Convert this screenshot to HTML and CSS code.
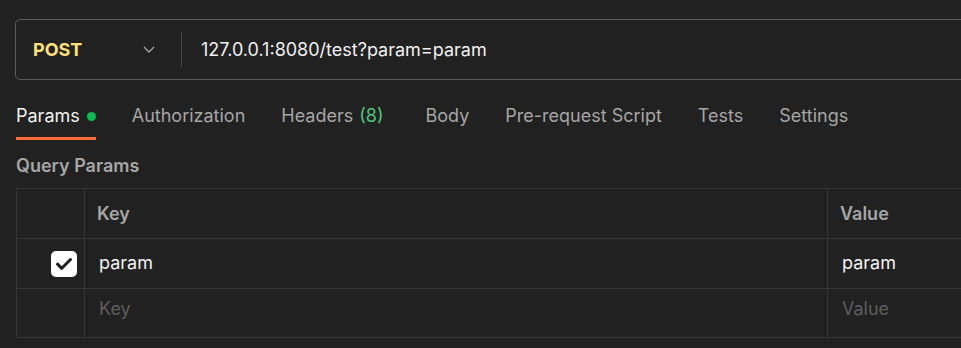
FILE: index.html
```html
<!DOCTYPE html>
<html lang="en">
<head>
    <meta charset="UTF-8">
    <meta name="viewport" content="width=device-width, initial-scale=1.0">
    <title>Request - Params</title>
    <link rel="stylesheet" href="styles.css">
</head>
<body>
    <div class="url-bar">
        <div class="method">
            <span class="method-name">POST</span>
            <svg class="chevron" width="12" height="7" viewBox="0 0 12 7">
                <path d="M1 1l5 5 5-5" fill="none" stroke="#a6a6a6" stroke-width="1.3"/>
            </svg>
        </div>
        <div class="url-divider"></div>
        <div class="url-text">127.0.0.1:8080/test?param=param</div>
    </div>

    <div class="tabs">
        <a href="#" class="tab active">Params <span class="dot"></span></a>
        <a href="#" class="tab">Authorization</a>
        <a href="#" class="tab">Headers <span class="count">(8)</span></a>
        <a href="#" class="tab">Body</a>
        <a href="#" class="tab">Pre-request Script</a>
        <a href="#" class="tab">Tests</a>
        <a href="#" class="tab">Settings</a>
    </div>

    <div class="section-title">Query Params</div>

    <div class="params-table">
        <div class="row header">
            <div class="cell check"></div>
            <div class="cell key">Key</div>
            <div class="cell value">Value</div>
        </div>
        <div class="row">
            <div class="cell check">
                <span class="checkbox">
                    <svg width="18" height="14" viewBox="0 0 18 14">
                        <path d="M2.5 7.2l4.3 4.1 8.7-8.8" fill="none" stroke="#1f1f1f" stroke-width="3" stroke-linecap="round" stroke-linejoin="round"/>
                    </svg>
                </span>
            </div>
            <div class="cell key filled">param</div>
            <div class="cell value filled">param</div>
        </div>
        <div class="row">
            <div class="cell check"></div>
            <div class="cell key placeholder">Key</div>
            <div class="cell value placeholder">Value</div>
        </div>
    </div>
</body>
</html>
```

FILE: styles.css
```css
/* Basic Styles */
body {
    font-family: Inter, "Noto Sans", sans-serif;
    margin: 0;
    padding: 0 0 0 15px;
    background-color: #212121;
    color: #e6e6e6;
    overflow: hidden;
    height: 348px;
}
.url-bar {
    margin-top: 19px;
    width: 980px;
    height: 59px;
    border: 1px solid #5b5b5b;
    border-radius: 5px;
    display: flex;
    align-items: center;
}
.method {
    width: 148px;
    padding-left: 17px;
    display: flex;
    align-items: center;
    justify-content: space-between;
}
.method-name {
    color: #ffe07a;
    font-weight: 700;
    font-size: 18px;
}
.chevron {
    margin-right: 26px;
}
.url-divider {
    width: 1px;
    height: 35px;
    background-color: #444;
}
.url-text {
    padding-left: 19px;
    font-size: 18px;
    color: #f0f0f0;
}
.tabs {
    display: flex;
    gap: 36px;
    margin-top: 26px;
    padding-left: 1px;
}
.tab {
    color: #a6a6a6;
    text-decoration: none;
    font-size: 18px;
    line-height: 20px;
    padding-bottom: 11px;
    border-bottom: 3px solid transparent;
    display: flex;
    align-items: center;
}
.tab.active {
    color: #f2f2f2;
    border-bottom-color: #ff6c37;
}
.dot {
    width: 9px;
    height: 9px;
    border-radius: 50%;
    background-color: #0cbb52;
    margin-left: 7px;
}
.count {
    color: #4ec77b;
    margin-left: 6px;
    margin-right: 6px;
}
.section-title {
    margin-top: 16px;
    padding-left: 1px;
    font-size: 18px;
    line-height: 20px;
    font-weight: 600;
    color: #a6a6a6;
}
.params-table {
    margin-top: 12px;
    margin-left: 1px;
    width: 980px;
    border: 1px solid #353535;
}
.row {
    display: grid;
    grid-template-columns: 67px 743px 1fr;
    height: 49px;
    border-bottom: 1px solid #353535;
}
.row:last-child {
    border-bottom: none;
    height: 48px;
}
.cell {
    display: flex;
    align-items: center;
    font-size: 18px;
}
.cell.key {
    border-left: 1px solid #353535;
    padding-left: 12px;
}
.cell.value {
    border-left: 1px solid #353535;
    padding-left: 12px;
}
.header .cell {
    font-weight: 600;
    color: #a6a6a6;
}
.cell.filled {
    padding-left: 14px;
    color: #f2f2f2;
    padding-bottom: 3px;
}
.cell.placeholder {
    padding-left: 14px;
    color: #5e5e5e;
    padding-bottom: 9px;
}
.cell.check {
    justify-content: flex-end;
    padding-right: 7px;
}
.checkbox {
    width: 26px;
    height: 26px;
    border-radius: 5px;
    background-color: #ffffff;
    display: flex;
    align-items: center;
    justify-content: center;
}
```
